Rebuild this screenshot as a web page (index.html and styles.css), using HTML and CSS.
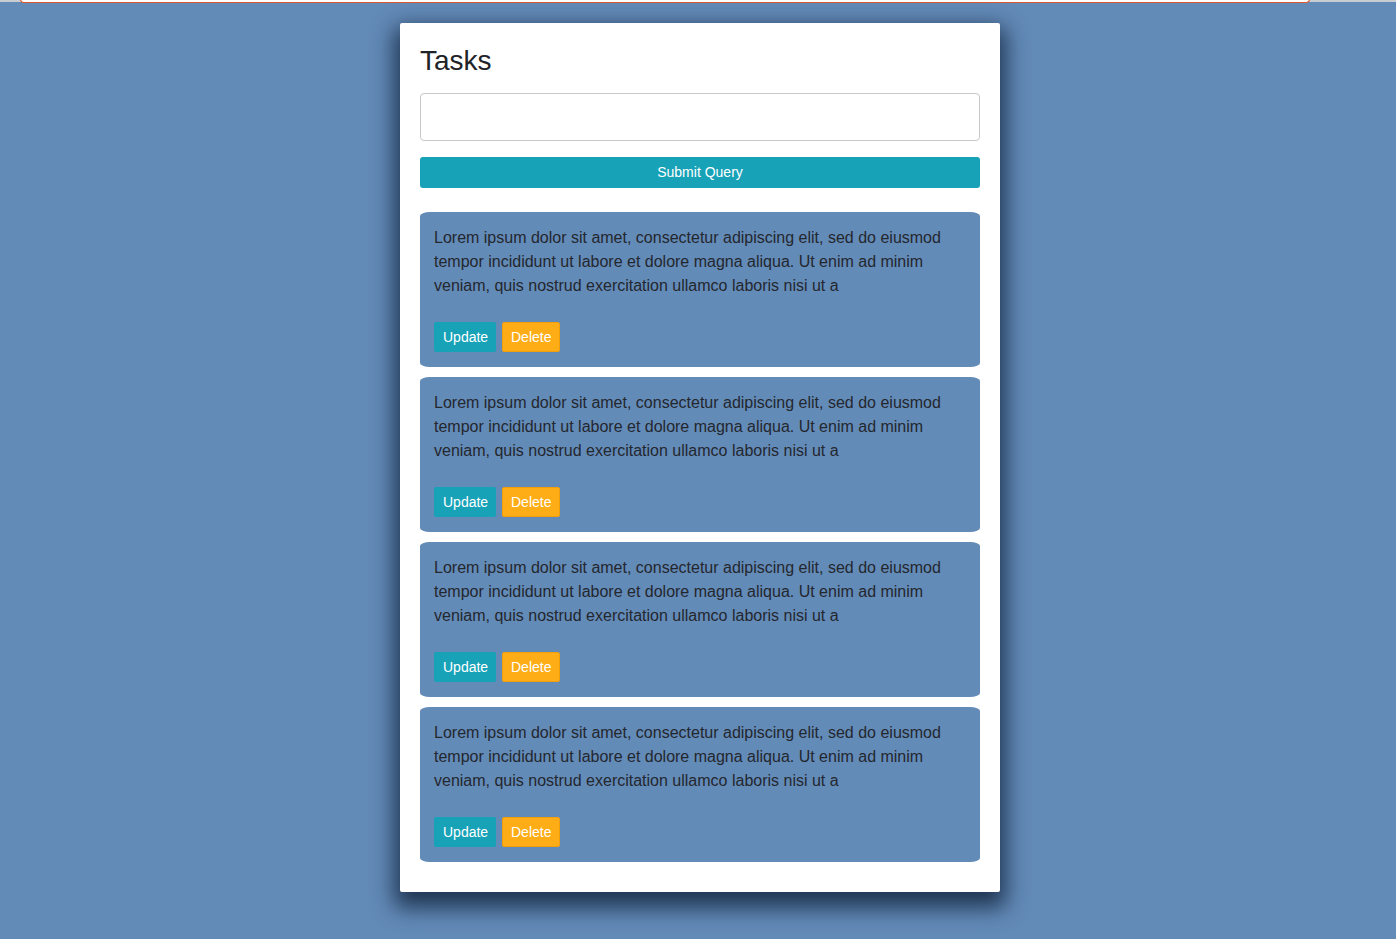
FILE: index.html
```html
<!DOCTYPE html>
<html lang="en">
<head>
<meta charset="utf-8">
<title>Tasks</title>
<link rel="stylesheet" href="styles.css">
</head>
<body>
<div class="topstrip"><div class="topbar"></div></div>
<main class="panel">
  <h3 class="title">Tasks</h3>
  <form class="form">
    <input class="field" type="text">
    <button class="submit" type="button">Submit Query</button>
  </form>
  <div class="list">
    <div class="card">
      <p class="text">Lorem ipsum dolor sit amet, consectetur adipiscing elit, sed do eiusmod tempor incididunt ut labore et dolore magna aliqua. Ut enim ad minim veniam, quis nostrud exercitation ullamco laboris nisi ut a</p>
      <div class="actions"><button class="btn update">Update</button><button class="btn delete">Delete</button></div>
    </div>
    <div class="card">
      <p class="text">Lorem ipsum dolor sit amet, consectetur adipiscing elit, sed do eiusmod tempor incididunt ut labore et dolore magna aliqua. Ut enim ad minim veniam, quis nostrud exercitation ullamco laboris nisi ut a</p>
      <div class="actions"><button class="btn update">Update</button><button class="btn delete">Delete</button></div>
    </div>
    <div class="card">
      <p class="text">Lorem ipsum dolor sit amet, consectetur adipiscing elit, sed do eiusmod tempor incididunt ut labore et dolore magna aliqua. Ut enim ad minim veniam, quis nostrud exercitation ullamco laboris nisi ut a</p>
      <div class="actions"><button class="btn update">Update</button><button class="btn delete">Delete</button></div>
    </div>
    <div class="card">
      <p class="text">Lorem ipsum dolor sit amet, consectetur adipiscing elit, sed do eiusmod tempor incididunt ut labore et dolore magna aliqua. Ut enim ad minim veniam, quis nostrud exercitation ullamco laboris nisi ut a</p>
      <div class="actions"><button class="btn update">Update</button><button class="btn delete">Delete</button></div>
    </div>
  </div>
</main>
</body>
</html>
```

FILE: styles.css
```css
* { box-sizing: border-box; }
html, body { margin: 0; padding: 0; }
body {
  background: #638bb8;
  font-family: "Liberation Sans", Arial, sans-serif;
  color: #212529;
  min-height: 939px;
  padding: 23px 0 0 4px;
}
.topstrip {
  position: absolute;
  top: 0; left: 0; right: 0;
  height: 2px;
  background: #c9ccd0;
}
.topbar {
  position: absolute;
  top: -2px; left: 20px;
  width: 1290px;
  height: 5px;
  background: #fff;
  border-bottom: 1px solid #e0572a;
  border-left: 1px solid #e0572a;
  border-right: 1px solid #e0572a;
  border-radius: 0 0 4px 4px;
}
.panel {
  width: 600px;
  margin: 0 auto;
  background: #fff;
  padding: 21px 20px 20px;
  border-radius: 2px;
  box-shadow: 0 10px 22px 6px rgba(10, 25, 50, 0.75);
}
.title {
  margin: 0 0 15px;
  font-size: 28px;
  font-weight: 400;
  line-height: 34px;
  color: #1f2328;
}
.form {
  display: flex;
  flex-direction: column;
  gap: 16px;
  margin-bottom: 24px;
}
.field {
  height: 48px;
  border: 1px solid #c8c8c8;
  border-radius: 4px;
  font-family: inherit;
  font-size: 16px;
  padding: 0 12px;
  background: #fff;
}
.submit {
  height: 31px;
  border: 0;
  border-radius: 3px;
  background: #17a2b8;
  color: #fff;
  font-family: inherit;
  font-size: 14px;
  padding: 0 0 2px;
}
.list {
  display: flex;
  flex-direction: column;
  gap: 10px;
  padding-bottom: 10px;
}
.card {
  background: #638bb8;
  border-radius: 10px / 4px;
  padding: 14px 14px 15px;
}
.text {
  margin: 0 0 24px;
  font-size: 16px;
  line-height: 24px;
  color: #23272e;
}
.actions {
  display: flex;
  gap: 6px;
}
.btn {
  height: 30px;
  border: 1px solid transparent;
  border-radius: 2px;
  font-family: inherit;
  font-size: 14px;
  color: #fff;
  padding: 0 8px;
}
.update {
  background: #17a2b8;
  border-color: #17a2b8;
  width: 62px;
}
.delete {
  background: #ffad17;
  border-color: #f29e0c;
  width: 58px;
}
```
